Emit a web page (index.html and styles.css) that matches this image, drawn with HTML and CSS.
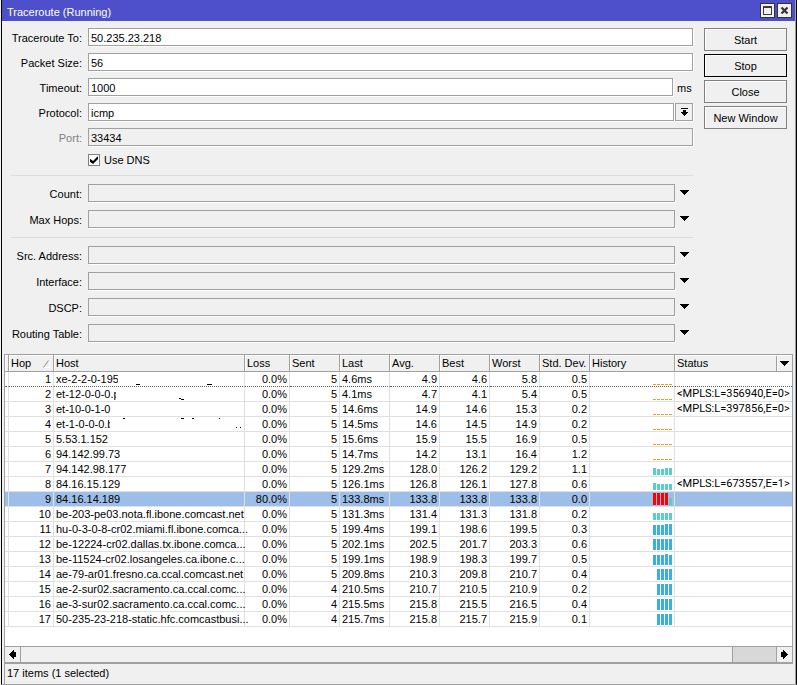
FILE: index.html
```html
<!DOCTYPE html>
<html lang="en">
<head>
     <meta charset="UTF-8">
     <title>Traceroute (Running)</title>
     <link rel="stylesheet" href="styles.css">
</head>
<body>
     <div class="window">
          <div class="titlebar">
               <h1>Traceroute (Running)</h1>
               <button type="button" class="winbtn" aria-label="Maximize">
                    <svg width="11" height="11" shape-rendering="crispEdges"><path d="M1 1h9v9H1z M2 3v6h7V3z" fill="#3c3c3c" fill-rule="evenodd"/></svg>
               </button>
               <button type="button" class="winbtn" aria-label="Close window">
                    <svg width="11" height="11" viewBox="0 0 11 11"><path d="M2.5 2.5l6 6M8.5 2.5l-6 6" stroke="#333" stroke-width="2.2"/></svg>
               </button>
          </div>
          <form class="setup">
               <div class="fields">
                    <div class="row">
                         <label for="to">Traceroute To:</label>
                         <input type="text" id="to" class="field" value="50.235.23.218">
                    </div>
                    <div class="row">
                         <label for="size">Packet Size:</label>
                         <input type="text" id="size" class="field" value="56">
                    </div>
                    <div class="row">
                         <label for="timeout">Timeout:</label>
                         <input type="text" id="timeout" class="field" value="1000">
                         <span class="unit">ms</span>
                    </div>
                    <div class="row">
                         <label for="protocol">Protocol:</label>
                         <select id="protocol" class="field"><option>icmp</option><option>udp</option></select>
                         <button type="button" class="pick" aria-label="Choose protocol">
                              <svg width="7" height="8" shape-rendering="crispEdges"><path d="M0 0h7v1H0z M2 2h3v2h2v1H6v1H5v1H4v1H3V7H2V6H1V5H0V4h2z"/></svg>
                         </button>
                    </div>
                    <div class="row">
                         <label for="port" class="off">Port:</label>
                         <input type="text" id="port" class="field grey" value="33434" readonly>
                    </div>
                    <div class="row check">
                         <input type="checkbox" id="dns" checked>
                         <label for="dns">Use DNS</label>
                    </div>
                    <hr>
                    <div class="row wide">
                         <label for="count">Count:</label>
                         <input type="text" id="count" class="field grey">
                         <button type="button" class="drop" aria-label="Set count"><svg class="arrow"><use href="#down"/></svg></button>
                    </div>
                    <div class="row wide">
                         <label for="hops">Max Hops:</label>
                         <input type="text" id="hops" class="field grey">
                         <button type="button" class="drop" aria-label="Set max hops"><svg class="arrow"><use href="#down"/></svg></button>
                    </div>
                    <hr>
                    <div class="row wide">
                         <label for="src">Src. Address:</label>
                         <input type="text" id="src" class="field grey">
                         <button type="button" class="drop" aria-label="Set source address"><svg class="arrow"><use href="#down"/></svg></button>
                    </div>
                    <div class="row wide">
                         <label for="iface">Interface:</label>
                         <input type="text" id="iface" class="field grey">
                         <button type="button" class="drop" aria-label="Set interface"><svg class="arrow"><use href="#down"/></svg></button>
                    </div>
                    <div class="row wide">
                         <label for="dscp">DSCP:</label>
                         <input type="text" id="dscp" class="field grey">
                         <button type="button" class="drop" aria-label="Set DSCP"><svg class="arrow"><use href="#down"/></svg></button>
                    </div>
                    <div class="row wide">
                         <label for="rtable">Routing Table:</label>
                         <input type="text" id="rtable" class="field grey">
                         <button type="button" class="drop" aria-label="Set routing table"><svg class="arrow"><use href="#down"/></svg></button>
                    </div>
               </div>
               <div class="actions">
                    <button type="button">Start</button>
                    <button type="button" class="active">Stop</button>
                    <button type="button">Close</button>
                    <button type="button">New Window</button>
               </div>
          </form>
          <div class="results">
               <div class="list">
                    <table>
                         <colgroup>
                              <col class="c-mark"><col class="c-hop"><col class="c-host"><col class="c-loss">
                              <col class="c-num"><col class="c-num"><col class="c-num"><col class="c-num"><col class="c-num"><col class="c-num">
                              <col class="c-hist"><col>
                         </colgroup>
                         <thead>
                              <tr>
                                   <th></th>
                                   <th><div class="split">Hop <svg width="8" height="8"><path d="M5.5 0.5L7.5 7.5H0.5" stroke="#fff" fill="none"/><path d="M0.5 7.5L5.5 0.5" stroke="#888" fill="none"/></svg></div></th>
                                   <th>Host</th>
                                   <th>Loss</th>
                                   <th>Sent</th>
                                   <th>Last</th>
                                   <th>Avg.</th>
                                   <th>Best</th>
                                   <th>Worst</th>
                                   <th>Std. Dev.</th>
                                   <th>History</th>
                                   <th><div class="split">Status <button type="button" class="cols" aria-label="Columns"><svg class="arrow"><use href="#down"/></svg></button></div></th>
                              </tr>
                         </thead>
                         <tbody id="hoplist"></tbody>
                    </table>
               </div>
               <div class="scroll">
                    <button type="button" aria-label="Scroll left"><svg width="7" height="9" shape-rendering="crispEdges"><path d="M0 4h1V3h1V2h1V1h1V0h1v2h2v5H5v2H4V8H3V7H2V6H1V5H0z"/></svg></button>
                    <div class="thumb"></div>
                    <div class="trough"></div>
                    <button type="button" aria-label="Scroll right"><svg width="7" height="9" shape-rendering="crispEdges"><path d="M7 4H6V3H5V2H4V1H3V0H2v2H0v5h2v2h1V8h1V7h1V6h1V5h1z"/></svg></button>
               </div>
          </div>
          <div class="status">17 items (1 selected)</div>
     </div>
     <svg class="defs"><symbol id="down" viewBox="0 0 9 5"><path shape-rendering="crispEdges" d="M0 0h9v1H8v1H7v1H6v1H5v1H4V4H3V3H2V2H1V1H0z"/></symbol></svg>
     <script type="text/javascript">
     // host, loss, sent, last, avg, best, worst, dev, bars, status
     var hops=[
          ["xe-2-2-0-195","0.0%",5,"4.6ms","4.9","4.6","5.8","0.5","o1 o1 o1 o1 o1",""],
          ["et-12-0-0-0.p","0.0%",5,"4.1ms","4.7","4.1","5.4","0.5","o1 o1 o1 o1 o1","<MPLS:L=356940,E=0>"],
          ["et-10-0-1-0","0.0%",5,"14.6ms","14.9","14.6","15.3","0.2","o1 o1 o1 o1 o1","<MPLS:L=397856,E=0>"],
          ["et-1-0-0-0.b","0.0%",5,"14.5ms","14.6","14.5","14.9","0.2","o1 o1 o1 o1 o1",""],
          ["5.53.1.152","0.0%",5,"15.6ms","15.9","15.5","16.9","0.5","o1 o1 o1 o1 o1",""],
          ["94.142.99.73","0.0%",5,"14.7ms","14.2","13.1","16.4","1.2","o1 o1 o1 o1 o1",""],
          ["94.142.98.177","0.0%",5,"129.2ms","128.0","126.2","129.2","1.1","t7 t6 t6 t7 t7",""],
          ["84.16.15.129","0.0%",5,"126.1ms","126.8","126.1","127.8","0.6","t7 t6 t6 t6 t6","<MPLS:L=673557,E=1>"],
          ["84.16.14.189","80.0%",5,"133.8ms","133.8","133.8","133.8","0.0","r12 r12 r12 r12 t7",""],
          ["be-203-pe03.nota.fl.ibone.comcast.net","0.0%",5,"131.3ms","131.4","131.3","131.8","0.2","t7 t7 t7 t7 t7",""],
          ["hu-0-3-0-8-cr02.miami.fl.ibone.comca...","0.0%",5,"199.4ms","199.1","198.6","199.5","0.3","b10 b10 b10 b11 b11",""],
          ["be-12224-cr02.dallas.tx.ibone.comca...","0.0%",5,"202.1ms","202.5","201.7","203.3","0.6","b11 b11 b11 b11 b11",""],
          ["be-11524-cr02.losangeles.ca.ibone.c...","0.0%",5,"199.1ms","198.9","198.3","199.7","0.5","b10 b10 b10 b11 b10",""],
          ["ae-79-ar01.fresno.ca.ccal.comcast.net","0.0%",5,"209.8ms","210.3","209.8","210.7","0.4","b11 b11 b11 b11",""],
          ["ae-2-sur02.sacramento.ca.ccal.comc...","0.0%",4,"210.5ms","210.7","210.5","210.9","0.2","b11 b11 b11 b11",""],
          ["ae-3-sur02.sacramento.ca.ccal.comc...","0.0%",4,"215.5ms","215.8","215.5","216.5","0.4","b11 b11 b11 b11",""],
          ["50-235-23-218-static.hfc.comcastbusi...","0.0%",4,"215.7ms","215.8","215.7","215.9","0.1","b11 b11 b11 b11",""]
     ];
     // erased host names: visible width of the name and what is left of the rest
     var erased={
          1:[62,"M18 12h4v1h-4z M89 12h5v1h-5z"],
          2:[60,"M63 11h2v1h3v1h-3v-1h-2z"],
          4:[54,"M13 1h2v1h-2z M71 1h3v1h-3z M82 1h2v1h-2z M109 1h1v1h-1z M126 10h1v1h-1z M130 10h1v1h-1z"]
     };
     var colors={o:"orange",t:"teal",b:"blue",r:"red"};
     var tbody=document.getElementById("hoplist");

     function addCell(tr,text,cls){
          var td=document.createElement("td");
          td.textContent=text;
          if(cls) td.className=cls;
          tr.appendChild(td);
          return td;
     }

     for(var i=0;i<hops.length;i++){
          var h=hops[i];
          var tr=document.createElement("tr");
          if(i==0) tr.className="focus";
          if(i==8) tr.className="selected";
          addCell(tr,"");
          addCell(tr,i+1,"num");
          var host=addCell(tr,h[0],"host");
          if(erased[i+1]){
               host.innerHTML='<div class="cut"><span style="width:'+erased[i+1][0]+'px">'+h[0]+'</span><svg shape-rendering="crispEdges"><path d="'+erased[i+1][1]+'"/></svg></div>';
          }
          addCell(tr,h[1],"num");
          addCell(tr,h[2],"num");
          addCell(tr,h[3]);
          for(var j=4;j<8;j++){
               addCell(tr,h[j],"num");
          }
          var bars=h[8].split(" ");
          var html='<div class="bars">';
          for(var k=0;k<bars.length;k++){
               html+='<i class="'+colors[bars[k].charAt(0)]+'" style="height:'+bars[k].substring(1)+'px"></i>';
          }
          addCell(tr,"").innerHTML=html+'</div>';
          addCell(tr,h[9],"note");
          tbody.appendChild(tr);
     }
     </script>
</body>
</html>
```
FILE: styles.css
```css
*{
     box-sizing: border-box;
}
body{
     margin: 0;
     background: #f0f0f0;
     color: #000;
}
body,button,input,select{
     font-family: "Liberation Sans", Arial, sans-serif;
     font-size: 11px;
}
button{
     padding: 0;
     color: #000;
     background: #f0f0f0;
     display: flex;
     align-items: center;
     justify-content: center;
}
.defs{
     display: none;
}
.window{
     min-height: 100vh;
     margin-left: 1px;
     border-left: 1px solid #000;
     border-right: 1px solid #000;
     border-bottom: 1px solid #a0a0a0;
     box-shadow: inset -1px 0 0 #a0a0a0;
     padding-right: 1px;
     display: flex;
     flex-direction: column;
}
.titlebar{
     height: 21px;
     padding: 0 3px 0 5px;
     background: #4d4fcb;
     color: #fff;
     display: flex;
     align-items: center;
     gap: 2px;
}
.titlebar h1{
     margin: 0;
     padding-top: 3px;
     flex: 1;
     font-size: 11px;
     line-height: 18px;
     font-weight: normal;
}
.winbtn{
     width: 15px;
     height: 15px;
     border: 1px solid #333;
}

.setup{
     padding: 7px 8px 12px 9px;
     display: flex;
     gap: 11px;
}
.fields{
     flex: 1;
}
.row{
     height: 18px;
     margin-bottom: 7px;
     display: flex;
}
.row.wide{
     margin-bottom: 8px;
}
.row.wide:last-child{
     margin-bottom: 0;
}
.row label{
     width: 71px;
     margin-right: 6px;
     line-height: 20px;
     text-align: right;
     white-space: nowrap;
}
.row label.off{
     color: #808080;
}
.field{
     flex: 1;
     min-width: 0;
     height: 18px;
     padding: 1px 2px 0;
     border: 1px solid #a0a0a0;
     border-radius: 0;
     background: #fff;
     color: #000;
     box-shadow: 1px 1px 0 #fff;
     appearance: none;
     outline: none;
}
.field.grey{
     background: #f0f0f0;
}
.unit{
     width: 20px;
     padding-left: 4px;
     line-height: 20px;
}
.pick{
     width: 18px;
     height: 18px;
     margin-left: 1px;
     border: 1px solid #a0a0a0;
     box-shadow: 1px 1px 0 #fff;
}
.drop{
     width: 18px;
     height: 16px;
     border: 0;
}
.arrow{
     width: 9px;
     height: 5px;
}
.row.check{
     height: 14px;
     padding-left: 77px;
     margin-bottom: 8px;
     align-items: center;
}
.row.check label{
     width: auto;
     margin-left: 4px;
}
.row.check input{
     width: 12px;
     height: 12px;
     margin: 0;
     border: 1px solid #808080;
     background: #fff;
     appearance: none;
     display: grid;
     place-items: center;
}
.row.check input:checked::before{
     content: "";
     width: 8px;
     height: 8px;
     background: #000;
     clip-path: polygon(0 35%, 38% 62%, 100% 0, 100% 38%, 38% 100%, 0 72%);
}
.fields hr{
     height: 1px;
     margin: 0 0 8px;
     border: 0;
     background: #dcdcdc;
}
.row.wide + hr{
     margin-top: 9px;
}
.actions{
     width: 83px;
     display: flex;
     flex-direction: column;
     gap: 3px;
}
.actions button{
     height: 23px;
     padding-top: 1px;
     border: 1px solid #808080;
     box-shadow: inset 1px 1px 0 #fff;
}
.actions button.active{
     border-color: #000;
}

.results{
     flex: 1;
     margin: 0 2px;
     border: 1px solid #a0a0a0;
     border-bottom-width: 2px;
     background: #fff;
     display: flex;
     flex-direction: column;
}
.list{
     flex: 1;
     overflow: hidden;
}
table{
     width: 100%;
     table-layout: fixed;
     border-collapse: separate;
     border-spacing: 0;
}
.c-mark{ width: 4px; }
.c-hop{ width: 45px; }
.c-host{ width: 191px; }
.c-loss{ width: 45px; }
.c-num{ width: 50px; }
.c-hist{ width: 85px; }
th{
     height: 17px;
     padding: 1px 0 0 2px;
     background: #f0f0f0;
     border-right: 1px solid #a0a0a0;
     border-bottom: 1px solid #a0a0a0;
     box-shadow: inset 1px 1px 0 #fff;
     line-height: 15px;
     font-weight: normal;
     text-align: left;
     white-space: nowrap;
}
td{
     height: 15px;
     padding: 0 2px;
     border-right: 1px solid #e0e0e0;
     border-bottom: 1px solid #e0e0e0;
     line-height: 14px;
     white-space: nowrap;
}
th:first-child,td:first-child{
     padding: 0;
}
th:last-child,td:last-child{
     border-right: 0;
}
td.host{
     padding-right: 0;
}
td.note{
     padding-right: 0;
     font-family: Roboto, "Liberation Sans", sans-serif;
}
.split{
     display: flex;
     align-items: center;
     justify-content: space-between;
}
.split svg{
     margin-right: 2px;
}
.cols{
     width: 16px;
     height: 15px;
     border: 0;
     border-left: 1px solid #a0a0a0;
     box-shadow: inset 1px 0 0 #fff;
}
.cols svg{
     margin: 0;
}
.num{
     text-align: right;
}
.focus td{
     border-bottom: 1px dotted #606060;
}
.selected td{
     background: #9cbee9;
}
.cut{
     height: 14px;
     display: flex;
}
.cut span{
     overflow: hidden;
}
.cut svg{
     flex: 1;
     width: 0;
     height: 14px;
}
.bars{
     height: 14px;
     padding-bottom: 1px;
     display: flex;
     align-items: flex-end;
     justify-content: flex-end;
     gap: 1px;
}
.bars i{
     width: 3px;
}
.orange{ background: #ff9c10; }
.teal{ background: #58d0c8; }
.blue{ background: #38b0e0; }
.red{ background: #ff0000; }

.scroll{
     height: 16px;
     border-top: 1px solid #a0a0a0;
     display: flex;
}
.scroll button{
     width: 15px;
     border: 0;
}
.thumb{
     flex: 1;
     background: #f0f0f0;
     border: solid #a0a0a0;
     border-width: 0 1px;
}
.trough{
     width: 44px;
     background: #d8d8d8;
     border-right: 1px solid #a0a0a0;
}
.status{
     height: 20px;
     margin-left: 2px;
     padding-left: 2px;
     border-left: 1px solid #a0a0a0;
     line-height: 19px;
}
```
